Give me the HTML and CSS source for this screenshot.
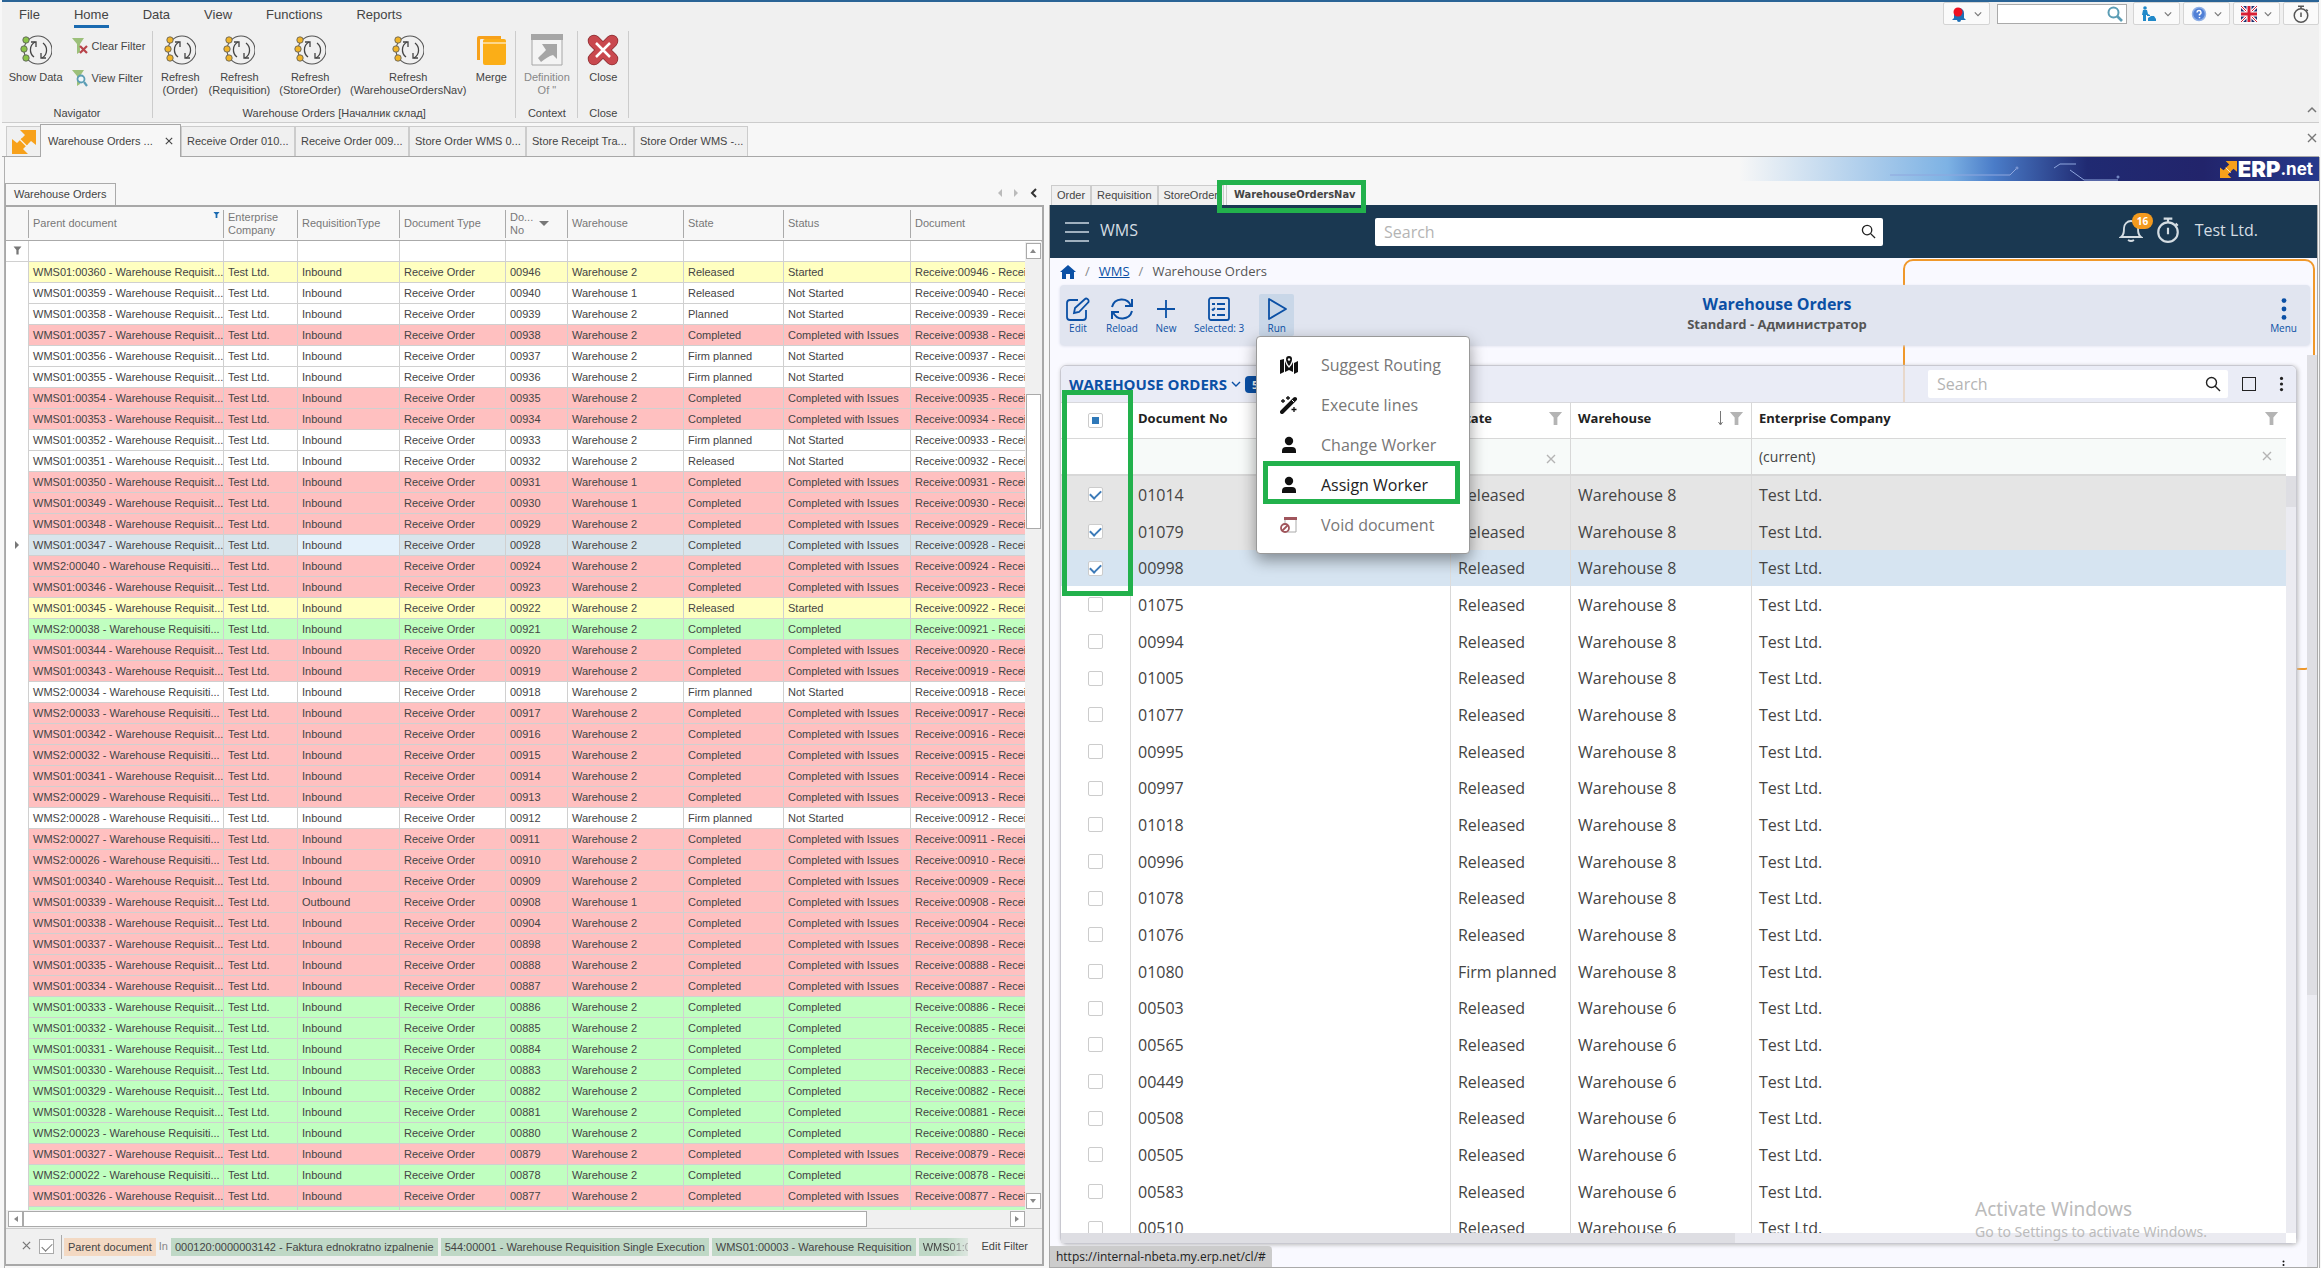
FILE: index.html
```html
<!DOCTYPE html>
<html lang="en">
<head>
<meta charset="utf-8">
<title>Warehouse Orders</title>
<link rel="stylesheet" href="styles.css">
</head>
<body>
<svg class="defs" aria-hidden="true">
  <symbol id="i-refresh" viewBox="0 0 32 32">
    <circle cx="18" cy="16" r="14" fill="none" stroke="#555" stroke-width="1.1"/>
    <path d="M15 8a9 9 0 0 0-1 15M22 24a9 9 0 0 0 1-15" fill="none" stroke="#444" stroke-width="1.3"/>
    <path d="M11 8h5v5M26 24h-5v-5" fill="none" stroke="#444" stroke-width="1.3"/>
    <g fill="currentColor" stroke="#555" stroke-width=".8"><circle cx="6" cy="6" r="3.2"/><circle cx="4" cy="15" r="3.2"/><circle cx="6" cy="24" r="3.2"/></g>
  </symbol>
  <symbol id="i-funnel" viewBox="0 0 16 16"><path d="M1 1h14l-5 6v8H6V7z" fill="currentColor"/></symbol>
  <symbol id="i-lens" viewBox="0 0 16 16"><circle cx="6.5" cy="6.5" r="5" fill="none" stroke="currentColor" stroke-width="1.4"/><path d="M10 10l5 5" stroke="currentColor" stroke-width="1.4"/></symbol>
  <symbol id="i-chev" viewBox="0 0 10 10"><path d="M1 3l4 4 4-4" fill="none" stroke="currentColor" stroke-width="1.4"/></symbol>
  <symbol id="i-x" viewBox="0 0 10 10"><path d="M1 1l8 8M9 1l-8 8" fill="none" stroke="currentColor" stroke-width="1.4"/></symbol>
  <symbol id="i-erp" viewBox="0 0 24 24"><g fill="#f7a11b"><path d="M8 0h16v15l-5-4-5 5-6-6 5-5z"/><path d="M16 24H0V9l5 4 5-5 6 6-5 5z"/></g><path d="M8 9.500l7 7" stroke="#f9f3e8" stroke-width="1.200"/></symbol>
  <symbol id="i-timer" viewBox="0 0 24 24"><g fill="none" stroke="currentColor" stroke-width="2"><circle cx="12" cy="14" r="9"/><path d="M12 10v6M12 5V2M8 1.500h8M19 6l2 2"/></g></symbol>
  <symbol id="i-dots" viewBox="0 0 6 20"><g fill="currentColor"><circle cx="3" cy="3" r="2"/><circle cx="3" cy="10" r="2"/><circle cx="3" cy="17" r="2"/></g></symbol>
  <symbol id="i-person" viewBox="0 0 16 18"><circle cx="8" cy="5" r="4.200" fill="currentColor"/><path d="M1 17v-2q0-4 4-4h6q4 0 4 4v2z" fill="currentColor"/></symbol>
</svg>

<header class="ribbon">
  <div class="menubar">
    <nav class="menu">
      <a href="#">File</a><a href="#" class="on">Home</a><a href="#">Data</a><a href="#">View</a><a href="#">Functions</a><a href="#">Reports</a>
    </nav>
    <div class="quick">
      <button class="qbtn" aria-label="Alerts"><svg width="16" height="16" viewBox="0 0 16 16"><path d="M3 12V7a5 5 0 0 1 10 0v5l2 2H1z" fill="#1d6fb5"/><circle cx="8" cy="14" r="2" fill="#1d6fb5"/><circle cx="7" cy="6" r="4.500" fill="#f01020"/></svg><svg class="chev" width="8" height="8"><use href="#i-chev"/></svg></button>
      <label class="qsearch"><input type="text" aria-label="Search"><svg width="16" height="16" viewBox="0 0 16 16"><circle cx="6.500" cy="6.500" r="5" fill="none" stroke="#5b9db5" stroke-width="2"/><path d="M10 10l5 5" stroke="#5b9db5" stroke-width="2.600"/></svg></label>
      <button class="qbtn" aria-label="User"><svg width="16" height="16" viewBox="0 0 16 16" fill="#2189c9"><circle cx="4" cy="2" r="1.800"/><path d="M2 4h4l1 4 2 1v1H6V9H5v6H2V9H1zM7 15v-3l3-2h3l2 3v2z"/></svg><svg class="chev" width="8" height="8"><use href="#i-chev"/></svg></button>
      <button class="qbtn" aria-label="Help"><svg width="16" height="16" viewBox="0 0 16 16"><circle cx="8" cy="8" r="6.500" fill="#4f7fd6" stroke="#8fb0e6" stroke-width="1.500"/><path d="M6 6.500a2 2 0 1 1 2.500 2v1M8.500 11v1.200" fill="none" stroke="#fff" stroke-width="1.500"/></svg><svg class="chev" width="8" height="8"><use href="#i-chev"/></svg></button>
      <button class="qbtn" aria-label="Language"><svg width="16" height="16" viewBox="0 0 16 16"><path fill="#20306f" d="M0 0h16v16H0z"/><path d="M0 0l16 16M16 0L0 16" stroke="#fff" stroke-width="3"/><path d="M0 0l16 16M16 0L0 16" stroke="#d81e34" stroke-width="1"/><path d="M8 0v16M0 8h16" stroke="#fff" stroke-width="5"/><path d="M8 0v16M0 8h16" stroke="#d81e34" stroke-width="3"/></svg><svg class="chev" width="8" height="8"><use href="#i-chev"/></svg></button>
      <button class="qbtn timer" aria-label="Timer"><svg width="18" height="18"><use href="#i-timer"/></svg></button>
    </div>
  </div>
  <div class="groups">
    <section class="group navigator">
      <div class="tools">
        <button class="big green"><svg width="32" height="32"><use href="#i-refresh"/></svg>Show Data</button>
        <div class="stack">
          <button class="small"><svg width="16" height="18" viewBox="0 0 16 18"><path d="M0 1h12L8 7v8L5 17V7z" fill="#9cc07a"/><path d="M8 9l7 7M15 9l-7 7" stroke="#b8434a" stroke-width="2.200"/></svg>Clear Filter</button>
          <button class="small"><svg width="16" height="18" viewBox="0 0 16 18"><path d="M0 1h12L8 7v8L5 17V7z" fill="#9cc07a"/><circle cx="9" cy="10" r="3.500" fill="#eef6fa" stroke="#5b9db5" stroke-width="1.800"/><path d="M12 13l3 4" stroke="#5b9db5" stroke-width="2.200"/></svg>View Filter</button>
        </div>
      </div>
      <h2>Navigator</h2>
    </section>
    <section class="group">
      <div class="tools">
        <button class="big"><svg width="32" height="32"><use href="#i-refresh"/></svg>Refresh<br>(Order)</button>
        <button class="big"><svg width="32" height="32"><use href="#i-refresh"/></svg>Refresh<br>(Requisition)</button>
        <button class="big"><svg width="32" height="32"><use href="#i-refresh"/></svg>Refresh<br>(StoreOrder)</button>
        <button class="big"><svg width="32" height="32"><use href="#i-refresh"/></svg>Refresh<br>(WarehouseOrdersNav)</button>
        <button class="big"><svg width="32" height="32" viewBox="0 0 32 32"><path d="M2 26V4q0-2 2-2h22v3H6q-1 0-1 1v20z" fill="#f7a11b"/><rect x="8" y="5" width="23" height="26" rx="2" fill="#fbae17"/><path d="M8 9h23" stroke="#fff" stroke-width="1"/></svg>Merge</button>
      </div>
      <h2>Warehouse Orders [Началник склад]</h2>
    </section>
    <section class="group context">
      <div class="tools"><button class="big off"><svg width="32" height="32" viewBox="0 0 32 32"><path d="M1 4h30v27H1z" fill="#f4f4f4" stroke="#a6a6a6"/><path d="M0 0h32v6H0z" fill="#a6a6a6"/><path d="M11 10h15v15l-4-4c-4 1-8 4-12 7l-3-4c3-3 6-6 8-8z" fill="#a6a6a6"/></svg>Definition<br>Of "</button></div>
      <h2>Context</h2>
    </section>
    <section class="group closer">
      <div class="tools"><button class="big"><svg width="32" height="32" viewBox="0 0 32 32"><path d="M7 7l18 18M25 7L7 25" stroke="#8c3034" stroke-width="12.500" stroke-linecap="round"/><path d="M7 7l18 18M25 7L7 25" stroke="#c9484e" stroke-width="11" stroke-linecap="round"/><path d="M9 9l14 14M23 9L9 23" stroke="#fff" stroke-width="2.500"/></svg>Close</button></div>
      <h2>Close</h2>
    </section>
    <svg class="collapse" width="10" height="10" viewBox="0 0 10 10"><path d="M1 7l4-4 4 4" fill="none" stroke="#777" stroke-width="1.500"/></svg>
  </div>
</header>

<nav class="doctabs">
  <button class="app" aria-label="ERP"><svg width="24" height="24"><use href="#i-erp"/></svg></button>
  <button class="dtab on">Warehouse Orders ...<svg width="8" height="8"><use href="#i-x"/></svg></button>
  <button class="dtab w114">Receive Order 010...</button>
  <button class="dtab w114">Receive Order 009...</button>
  <button class="dtab w117">Store Order WMS 0...</button>
  <button class="dtab w108">Store Receipt Tra...</button>
  <button class="dtab w114">Store Order WMS -...</button>
  <span class="closeall"><svg width="10" height="10"><use href="#i-x"/></svg></span>
</nav>

<main class="workspace">
  <div class="banner">
    <svg class="circuit" width="240" height="24" viewBox="0 0 240 24"><g fill="none" stroke="#8fa6dd" stroke-width="1"><path d="M0 18h120l6-6M164 11l6-4h16M180 13l14 10h34"/><circle cx="127" cy="11" r="1"/><circle cx="228" cy="20" r="1"/></g></svg>
    <svg class="mark" width="17" height="17"><use href="#i-erp"/></svg><span class="brand">ERP</span><span class="net">.net</span>
  </div>
  <div class="panes">
    <section class="left">
      <div class="pagetabs">
        <button class="ptab">Warehouse Orders</button>
        <div class="arrows"><i class="la"></i><i class="ra"></i><svg width="8" height="10" viewBox="0 0 8 10"><path d="M6 1L2 5l4 4" fill="none" stroke="#333" stroke-width="2"/></svg></div>
      </div>
      <div class="gridbox">
        <div class="gridview">
          <table class="grid">
            <colgroup><col class="c0"><col class="c1"><col class="c2"><col class="c3"><col class="c4"><col class="c5"><col class="c6"><col class="c7"><col class="c8"><col></colgroup>
            <thead>
              <tr><th></th><th>Parent document<svg class="hf" width="7" height="8"><use href="#i-funnel"/></svg></th><th>Enterprise<br>Company</th><th>RequisitionType</th><th>Document Type</th><th class="sorted">Do...<br>No<i></i></th><th>Warehouse</th><th>State</th><th>Status</th><th>Document</th></tr>
            </thead>
            <tbody id="orders">
              <tr class="filter"><td><svg width="9" height="9"><use href="#i-funnel"/></svg></td><td></td><td></td><td></td><td></td><td></td><td></td><td></td><td></td><td></td></tr>
            </tbody>
          </table>
          <div class="vbar"><span class="sb up"></span><span class="vthumb"></span><span class="sb down"></span></div>
        </div>
        <div class="hbar"><span class="sb prev"></span><span class="hthumb"></span><span class="sb next"></span></div>
        <div class="filterbar">
          <button class="fx" aria-label="Clear filter"><svg width="9" height="9"><use href="#i-x"/></svg></button>
          <input type="checkbox" checked aria-label="Filter enabled">
          <div class="expr"><span class="pill field">Parent document</span><span class="op">In</span><span class="pill">000120:0000003142 - Faktura ednokratno izpalnenie</span><span class="pill">544:00001 - Warehouse Requisition Single Execution</span><span class="pill">WMS01:00003 - Warehouse Requisition</span><span class="pill last">WMS01:00</span></div>
          <a href="#" class="edit">Edit Filter</a>
        </div>
      </div>
    </section>

    <section class="right">
      <div class="subtabs">
        <button>Order</button><button>Requisition</button><button>StoreOrder</button><button class="on">WarehouseOrdersNav</button>
        <span class="mark-box tabmark"></span>
      </div>
      <div class="web">
        <header class="topbar">
          <button class="burger" aria-label="Menu"><i></i><i></i><i></i></button>
          <span class="apptitle">WMS</span>
          <label class="topsearch"><input type="search" placeholder="Search" aria-label="Search"><svg width="15" height="15"><use href="#i-lens"/></svg></label>
          <div class="account">
            <span class="bell"><svg width="24" height="24" viewBox="0 0 24 24"><path d="M2 19c3-2 3-5 3-9a7 7 0 0 1 14 0c0 4 0 7 3 9zM9 22q3 2 6 0" fill="none" stroke="#d5dde3" stroke-width="1.800"/></svg><b>16</b></span>
            <svg width="26" height="26"><use href="#i-timer"/></svg>
            <span class="company">Test Ltd.</span>
          </div>
        </header>
        <div class="content">
          <div class="stage">
            <div class="frame"></div>
            <nav class="crumbs"><svg width="16" height="14" viewBox="0 0 16 14"><path d="M8 0l8 7h-2v7h-4V9H6v5H2V7H0z" fill="#0b50a5"/></svg><i>/</i><a href="#">WMS</a><i>/</i><span>Warehouse Orders</span></nav>
            <div class="toolbar">
              <div class="acts">
                <button><svg width="24" height="24" viewBox="0 0 24 24"><g fill="none" stroke="currentColor" stroke-width="1.800"><path d="M12 3H4q-3 0-3 3v14q0 3 3 3h13q3 0 3-3v-7"/><path d="M8 16l1-5L19 2q1-1 2.500 0t1 3L13 15z"/></g></svg>Edit</button>
                <button><svg width="24" height="24" viewBox="0 0 24 24"><g fill="none" stroke="currentColor" stroke-width="2"><path d="M2 10a10 10 0 0 1 19-1M22 14a10 10 0 0 1-19 1"/><path d="M22 2v7h-7M2 22v-7h7"/></g></svg>Reload</button>
                <button><svg width="24" height="24" viewBox="0 0 24 24"><path d="M12 3v18M3 12h18" stroke="currentColor" stroke-width="1.800"/></svg>New</button>
                <button><svg width="24" height="24" viewBox="0 0 24 24"><g fill="none" stroke="currentColor" stroke-width="1.800"><rect x="2" y="1" width="20" height="22" rx="2"/><path d="M10 7h8M10 12h8M10 18h8M5 7h3M5 18h3M5 12l1 1 2-2"/></g></svg>Selected: 3</button>
                <button class="run"><svg width="24" height="24" viewBox="0 0 24 24"><path d="M4 2v20l17-10z" fill="none" stroke="currentColor" stroke-width="1.800" stroke-linejoin="round"/></svg>Run</button>
                <div class="popup" role="menu">
                  <button><svg width="20" height="18" viewBox="0 0 20 18"><path d="M1 4l4-1v13l-4 2zM15 7l4-2v11l-4 2zM6 5q1 4 4 7 3-3 4-6v10l-4-2-4 2z" fill="currentColor"/><path d="M10 10C6 5 6 0 10 0s4 5 0 10z" fill="currentColor"/><circle cx="10" cy="3.500" r="1.200" fill="#fff"/></svg>Suggest Routing</button>
                  <button><svg width="18" height="18" viewBox="0 0 18 18"><path d="M2 16L15 3" stroke="currentColor" stroke-width="4" stroke-linecap="round"/><path d="M3 3v4M1 5h4M8 0v4M6 2h4M14 11v5M11.500 13.500h5" stroke="currentColor" stroke-width="1.300"/><path d="M12 4l2 2" stroke="#fff"/></svg>Execute lines</button>
                  <button><svg width="16" height="18"><use href="#i-person"/></svg>Change Worker</button>
                  <button class="hot"><svg width="16" height="18"><use href="#i-person"/></svg>Assign Worker<span class="mark-box itemmark"></span></button>
                  <button><svg width="18" height="18" viewBox="0 0 18 18"><path d="M5 2v14h11V2z" fill="#fff" stroke="#aaa"/><path d="M4 1h13v3H4z" fill="#a0555c"/><circle cx="5" cy="12" r="4" fill="#fff" stroke="#a0555c" stroke-width="1.800"/><path d="M2 15l6-6" stroke="#a0555c" stroke-width="1.800"/></svg>Void document</button>
                </div>
              </div>
              <div class="heading"><h1>Warehouse Orders</h1><p>Standard - Администратор</p></div>
              <button class="more"><svg width="8" height="24"><use href="#i-dots"/></svg>Menu</button>
            </div>
            <section class="card">
              <header class="cardhead">
                <h2>WAREHOUSE ORDERS</h2><svg width="10" height="10"><use href="#i-chev"/></svg><span class="count">5</span>
                <label class="cardsearch"><input type="search" placeholder="Search" aria-label="Search orders"><svg width="16" height="16"><use href="#i-lens"/></svg></label>
                <button class="square" aria-label="Maximize"></button>
                <button class="kebab" aria-label="More"><svg width="5" height="16"><use href="#i-dots"/></svg></button>
              </header>
              <div class="cardbody">
                <div class="listview">
                  <table class="list">
                    <colgroup><col class="k0"><col class="k1"><col class="k2"><col class="k3"><col></colgroup>
                    <thead>
                      <tr><th><input type="checkbox" class="some" aria-label="Select all"></th><th>Document No</th><th>State<svg class="f" width="15" height="15"><use href="#i-funnel"/></svg></th><th>Warehouse<svg class="f" width="15" height="15"><use href="#i-funnel"/></svg><svg class="s" width="7" height="15" viewBox="0 0 7 15"><path d="M3.500 0v13M1.500 11l2 3 2-3" fill="none" stroke="#777"/></svg></th><th>Enterprise Company<svg class="f" width="15" height="15"><use href="#i-funnel"/></svg></th></tr>
                      <tr class="cond"><td></td><td></td><td><svg class="f" width="10" height="10"><use href="#i-x"/></svg></td><td></td><td>(current)<svg class="f" width="10" height="10"><use href="#i-x"/></svg></td></tr>
                    </thead>
                    <tbody id="list"></tbody>
                  </table>
                </div>
                <div class="cardv"><i></i></div>
              </div>
              <div class="cardh"><i></i></div>
              <span class="mark-box checkmark"></span>
            </section>
            <div class="foot"><svg width="3" height="10"><use href="#i-dots"/></svg></div>
          </div>
          <div class="pagev"><i></i></div>
        </div>
        <div class="linkhint">https://internal-nbeta.my.erp.net/cl/#</div>
      </div>
      <div class="watermark"><b>Activate Windows</b>Go to Settings to activate Windows.</div>
    </section>
  </div>
</main>
<script src="app.js"></script>
</body>
</html>
```
FILE: styles.css
```css
* { box-sizing: border-box; }
html, body { height: 100%; margin: 0; }
body {
  display: flex; flex-direction: column; overflow: hidden;
  background: #f7f7f7; color: #444;
  font: 11px/13px "Liberation Sans", sans-serif;
}
button { font: inherit; color: inherit; border: 0; background: none; padding: 0; margin: 0; white-space: nowrap; }
a { color: inherit; text-decoration: none; }
h1, h2, p { margin: 0; font-size: inherit; font-weight: 400; }
.defs { position: absolute; width: 0; height: 0; }
input { font: inherit; margin: 0; border: 0; outline: 0; }

.ribbon { margin: 0 2px; border-top: 2px solid #2a6496; border-bottom: 1px solid #ccc; background: #f0f0f0; }
.menubar { display: flex; justify-content: space-between; height: 26px; }
.menu { display: flex; gap: 34px; padding-left: 17px; font-size: 13px; line-height: 26px; }
.menu a { height: 26px; }
.menu .on { border-bottom: 3px solid #1a6ab0; }
.quick { display: flex; gap: 3px; }
.qbtn { display: flex; align-items: center; justify-content: center; gap: 7px; width: 47px; height: 23px; border: 1px solid #d4d4d4; border-radius: 2px; background: #fafafa; }
.qbtn.timer { width: 36px; color: #555; }
.chev { color: #777; }
.qsearch { display: flex; align-items: center; width: 130px; height: 20px; margin: 2px 3px 0 4px; padding-right: 3px; border: 1px solid #aaa; background: #fff; }
.qsearch input { flex: 1; min-width: 0; background: none; }
.groups { display: flex; height: 94px; padding-top: 3px; }
.group { display: flex; flex-direction: column; justify-content: space-between; height: 87px; padding: 0 8px; border-right: 1px solid #ccc; }
.group h2 { text-align: center; line-height: 10px; white-space: nowrap; }
.tools { display: flex; justify-content: center; gap: 9px; padding-top: 3px; }
.big { display: flex; flex-direction: column; align-items: center; color: #444; }
.big svg { margin-bottom: 5px; color: #f0b429; }
.big.green svg { color: #8bc34a; }
.big.off { color: #888; }
.navigator { width: 151px; }
.stack { display: flex; flex-direction: column; gap: 14px; padding-top: 3px; }
.small { display: flex; align-items: center; gap: 4px; }
.context { width: 62px; }
.closer { width: 51px; }
.collapse { margin: auto 2px 7px auto; }

.doctabs { display: flex; align-items: flex-end; height: 34px; padding: 0 2px 0 4px; border-bottom: 1px solid #a8a8a8; margin: 0 2px; }
.doctabs button { height: 30px; border: 1px solid #ccc; border-bottom: 0; background: #f0f0f0; }
.doctabs .app { width: 34px; display: flex; align-items: center; justify-content: center; border-right: 0; }
.doctabs .dtab { padding: 0 5px; text-align: left; overflow: hidden; }
.doctabs .dtab.on { display: flex; align-items: center; justify-content: space-between; width: 141px; height: 33px; margin-bottom: -1px; padding: 0 7px; border-color: #a8a8a8; background: #f7f7f7; }
.doctabs .w114 { width: 114px; }
.doctabs .w117 { width: 117px; }
.doctabs .w108 { width: 108px; }
.closeall { margin: auto 0 auto auto; color: #777; }

.workspace { flex: 1; min-height: 0; display: flex; flex-direction: column; margin: 0 1px 0 4px; border: solid #b0b0b0; border-width: 0 1px 0 1px; }
.banner { display: flex; align-items: center; justify-content: flex-end; height: 24px; padding-right: 6px; color: #fff;
  background: linear-gradient(90deg, #f7f7f7, #7db2e4 36%, #4a7cc8 44%, #202a72 60%, #22246b 80%, #26398c) right / 580px 100% no-repeat; }
.circuit { margin-right: 90px; }
.brand { font: 900 22px/22px Inter, sans-serif; }
.net { font: 700 17px/22px Inter, sans-serif; }
.mark { margin-right: 1px; }
.panes { flex: 1; min-height: 0; display: flex; }

.left { flex: 0 0 1039px; flex: 0 0 44.9%; min-width: 0; display: flex; flex-direction: column; padding-bottom: 2px; }
.pagetabs { display: flex; justify-content: space-between; align-items: flex-end; height: 24px; }
.ptab { height: 22px; padding: 0 8px; border: 1px solid #aaa; border-bottom: 0; background: #f7f7f7; }
.arrows { display: flex; align-items: center; gap: 12px; padding: 0 6px 7px 0; }
.arrows i { border: 4px solid transparent; }
.arrows .la { border-right-color: #bbb; border-left: 0; }
.arrows .ra { border-left-color: #bbb; border-right: 0; }
.gridbox { flex: 1; min-height: 0; display: flex; flex-direction: column; border: 2px solid #a8a8a8; border-left-width: 1px; background: #f0f0f0; }
.gridview { position: relative; flex: 1; min-height: 0; overflow: hidden; background: #fff; }
table { border-collapse: separate; border-spacing: 0; table-layout: fixed; width: 100%; }
.c0 { width: 23px; } .c1 { width: 195px; } .c2 { width: 74px; } .c3 { width: 102px; } .c4 { width: 106px; }
.c5 { width: 62px; } .c6 { width: 116px; } .c7 { width: 100px; } .c8 { width: 127px; }
.grid th { position: relative; height: 34px; padding: 0 4px; text-align: left; font-weight: 400; color: #777; background: #f7f7f7; border-bottom: 1px solid #aaa; white-space: nowrap; }
.grid th:not(:last-child)::after { content: ""; position: absolute; right: 0; top: 3px; bottom: 2px; width: 1px; background: #aaa; }
.hf { position: absolute; right: 4px; top: 4px; color: #1a6ab0; }
.sorted i { position: absolute; right: 19px; top: 14px; border: 5px solid transparent; border-top-color: #777; border-bottom: 0; }
.grid td { height: 21px; padding: 0 4px; border: solid #d0d0d0; border-width: 0 1px 1px 0; white-space: nowrap; overflow: hidden; }
.grid td:first-child { background: #fff; border-bottom: 0; text-align: center; padding: 0; color: #777; }
.grid .filter td:first-child { border-bottom: 1px solid #d0d0d0; }
.grid .r td { background: #ffc0c0; }
.grid .g td { background: #c0ffc0; }
.grid .y td { background: #ffffc0; }
.grid .sel td { background: #d8e5ec; }
.grid .sel td:nth-child(4) { background: #e4f1fb; }
.grid tr td:first-child, .grid .sel td:first-child { background: #fff; }
.ptr { display: inline-block; border: 4px solid transparent; border-left-color: #777; border-right: 0; }
.vbar { position: absolute; right: 0; top: 35px; bottom: 0; width: 17px; background: #f0f0f0; display: flex; flex-direction: column; padding: 1px; }
.sb { flex: none; display: flex; align-items: center; justify-content: center; width: 15px; height: 16px; border: 1px solid #aaa; background: #fff; }
.sb::before { content: ""; border: 3px solid transparent; }
.up::before { border-bottom: 4px solid #888; border-top: 0; }
.down::before { border-top: 4px solid #888; border-bottom: 0; }
.prev::before { border-right: 4px solid #888; border-left: 0; }
.next::before { border-left: 4px solid #888; border-right: 0; }
.vthumb { width: 15px; height: 14%; margin: 135px 0 auto; border: 1px solid #aaa; background: #fff; }
.hbar { display: flex; height: 16px; margin-top: 1px; padding: 0 17px 0 2px; }
.hthumb { width: 83%; margin-right: auto; border: 1px solid #aaa; background: #fff; }
.filterbar { display: flex; align-items: center; height: 36px; padding: 0 14px; margin-top: 1px; border-top: 1px solid #ccc; }
.fx { width: 12px; color: #777; margin-right: 7px; }
input[type=checkbox] { appearance: none; flex: none; display: grid; place-items: center; width: 15px; height: 15px; border: 1px solid #ccc; background: #fff; }
input[type=checkbox]:checked::before { content: ""; width: 9px; height: 5px; border: solid #3c7ab8; border-width: 0 0 2px 2px; transform: translateY(-1px) rotate(-45deg); }
.filterbar input { border-color: #aaa; }
.filterbar input:checked::before { border-color: #777; border-width: 0 0 1px 1px; }
.expr { flex: 1; min-width: 0; display: flex; gap: 3px; overflow: hidden; margin-left: 7px; padding: 0 2px; height: 24px; align-items: center; border-left: 1px solid #aaa; white-space: nowrap; }
.pill { flex: none; padding: 0 4px; line-height: 18px; background: #bfd8c6; }
.pill.field { background: #f3d9c3; }
.pill.last { mask-image: linear-gradient(90deg, #000 45%, transparent); }
.op { color: #888; }
.edit { margin-left: 14px; }

.right { position: relative; flex: 1; min-width: 0; display: flex; flex-direction: column; padding-left: 5px; }
.subtabs { position: relative; display: flex; align-items: flex-end; height: 24px; padding-left: 2px; }
.subtabs button { height: 20px; padding: 0 5px; border: 1px solid #ccc; border-bottom: 0; background: #f0f0f0; }
.subtabs .on { height: 22px; margin-left: 2px; padding: 0 7px; font: 700 11px/13px "DejaVu Sans Condensed", "DejaVu Sans", sans-serif; background: #f7f7f7; }
.mark-box { position: absolute; border: 5px solid #22b14c; pointer-events: none; z-index: 5; }
.tabmark { left: 168px; top: -1px; width: 149px; height: 33px; }
.web { position: relative; flex: 1; min-height: 0; display: flex; flex-direction: column; margin-right: 1px; border: 1px solid #aaa; border-top: 0; font-family: "Open Sans", sans-serif; }
.topbar { flex: none; display: flex; align-items: center; height: 53px; padding: 0 59px 0 15px; background: #1a3851; color: #d5dde3; font-size: 16px; }
.burger { display: flex; flex-direction: column; gap: 7px; }
.burger i { width: 24px; height: 2px; background: #9fb0be; }
.apptitle { width: 275px; margin-left: 11px; padding-bottom: 3px; }
.topsearch, .cardsearch { display: flex; align-items: center; height: 28px; padding: 0 7px; border-radius: 2px; background: #fff; color: #222; font-size: 16px; }
.topsearch { width: 508px; }
.topsearch input, .cardsearch input { flex: 1; min-width: 0; background: none; }
::placeholder { color: #b4b4b4; opacity: 1; }
.account { display: flex; align-items: center; margin-left: auto; padding-bottom: 3px; }
.bell { position: relative; width: 36px; height: 24px; }
.bell b { position: absolute; left: 13px; top: -5px; padding: 0 5px; border-radius: 8px; background: #f39a1e; color: #fff; font-size: 10px; line-height: 16px; }
.company { margin-left: 14px; }
.content { flex: 1; min-height: 0; display: flex; background: #f9f9ff; }
.stage { position: relative; flex: 1; min-width: 0; display: flex; flex-direction: column; padding: 0 10px; }
.frame { position: absolute; left: 853px; right: -8px; top: 1px; height: 411px; border: 2px solid #f0982a; border-radius: 10px; }
.crumbs { position: relative; display: flex; align-items: center; gap: 9px; height: 27px; font-size: 13px; color: #555; }
.crumbs i { font-style: normal; color: #888; }
.crumbs a { color: #0b50a5; text-decoration: underline; }
.toolbar { position: relative; z-index: 3; display: flex; justify-content: space-between; height: 60px; margin-right: -13px; padding: 9px 12px 0 5px; border-radius: 4px; background: #e1e5f0; box-shadow: 0 1px 3px #d6dae8; color: #0b50a5; font-size: 10px; }
.acts { position: relative; display: flex; gap: 14px; height: 42px; }
.acts > button, .more { display: flex; flex-direction: column; align-items: center; justify-content: space-between; height: 42px; padding: 3px 1px 1px; }
.acts > .run { width: 35px; background: #c9d7e8; border-radius: 2px; }
.heading { position: absolute; left: 0; right: 0; margin-left: 184px; text-align: center; font-weight: 700; pointer-events: none; }
.heading h1 { color: #0b50a5; font-size: 16px; line-height: 20px; font-weight: 700; }
.heading p { color: #555; font-size: 13px; line-height: 20px; font-weight: 700; }
.popup { position: absolute; left: 191px; top: 42px; width: 214px; padding: 8px 0; border: 1px solid #999; border-radius: 4px; background: #fff; box-shadow: 0 6px 16px #0006; }
.popup button { position: relative; display: grid; grid-template-columns: 20px 1fr; gap: 22px; align-items: center; justify-items: start; width: 100%; height: 40px; padding-left: 22px; font-size: 16px; color: #777; text-align: left; }
.popup svg { color: #111; justify-self: center; }
.popup .hot { color: #222; }
.itemmark { left: 6px; top: -4px; width: 197px; height: 43px; }

.card { position: relative; flex: 1; min-height: 0; display: flex; flex-direction: column; margin-top: 20px; border: 1px solid #c8c8d0; border-radius: 6px; box-shadow: 1px 1px 4px #bbb; }
.cardhead { position: relative; display: flex; align-items: center; height: 37px; padding-left: 8px; padding-right: 12px; background: #e6e9f4cc; border-bottom: 1px solid #d8d8dc; border-radius: 6px 6px 0 0; color: #0b50a5; }
.cardhead h2 { font-size: 15px; font-weight: 700; margin-right: 4px; white-space: nowrap; }
.count { width: 24px; margin-left: 4px; padding-left: 7px; border-radius: 4px; background: #0b50a5; color: #fff; font-weight: 700; line-height: 17px; }
.cardsearch { margin-left: auto; width: 300px; }
.square { width: 14px; height: 14px; margin: 0 23px 0 14px; border: 1px solid #222; }
.kebab { display: flex; color: #222; }
.cardbody { flex: 1; min-height: 0; display: flex; background: #fff; }
.listview { flex: 1; min-width: 0; overflow: hidden; }
.k0 { width: 70px; } .k1 { width: 320px; } .k2 { width: 120px; } .k3 { width: 181px; }
.list { font-size: 16px; line-height: 20px; color: #444; }
.list th { height: 36px; text-align: left; font-size: 13px; font-weight: 700; color: #222; padding: 0 7px 6px; border: solid #d8d8d8; border-width: 0 1px 1px 0; }
.list td { height: 37px; padding: 0 7px; border-right: 1px solid #d8d8d8; }
.list tr > :last-child { border-right: 0; }
.list tbody tr:nth-child(3n) td { height: 36px; }
.list .cond td { height: 37px; background: #f7faf9; border-bottom: 2px solid #d8d8d8; font-size: 14px; }
.list .cond td:first-child { background: #fff; }
.list tr > :first-child { text-align: center; padding: 0; }
.list input { margin: 0 auto; border-radius: 2px; }
.list .some::before { content: ""; width: 7px; height: 7px; background: #2e78b8; }
.list .on td { background: #e5e5e5; border-right-color: #dcdcdc; }
.list .cur td { background: #d6e4f1; border-right-color: #dcdcdc; }
.f { float: right; margin: 3px 0 0; color: #b4b4b4; }
.cond .f { margin: 4px 7px 0 0; }
th .s { float: right; margin: 3px 5px 0 0; }
.cardv { width: 10px; margin-top: 73px; background: #ebebf1; }
.cardv i { display: block; height: 31px; background: #dedee3; }
.cardh { height: 10px; padding-right: 10px; background: linear-gradient(#ebebf1, #ebebf1) 0 0 / calc(100% - 10px) 100% no-repeat #fff; }
.cardh i { display: block; width: 55%; height: 10px; background: #dedee3; }
.checkmark { left: 1px; top: 24px; width: 71px; height: 206px; }
.foot { flex: none; height: 23px; padding: 15px 12px 0; text-align: right; overflow: hidden; color: #111; }
.pagev { position: relative; z-index: 2; width: 10px; padding-top: 97px; }
.pagev::after { content: ""; display: block; height: calc(100% - 640px); background: #ebebf1; }
.pagev i { display: block; height: 640px; background: #dedee3; }
.linkhint { position: absolute; left: 0; bottom: 0; z-index: 6; padding: 0 6px; line-height: 21px; font-size: 12px; color: #222; background: #ccc; border-top-right-radius: 4px; }
.watermark { position: absolute; right: 112px; bottom: 26px; z-index: 6; color: #bbb; font: 14px/20px "Noto Sans", sans-serif; pointer-events: none; }
.watermark b { display: block; font-size: 19px; line-height: 26px; font-weight: 400; }
```
FILE: app.js
```js
// reference | document no | row kind | optional warehouse and state
const orders = [
  "1:00360 00946 y", "1:00359 00940 w W1 Released", "1:00358 00939 w W2 Planned", "1:00357 00938 r",
  "1:00356 00937 w", "1:00355 00936 w", "1:00354 00935 r", "1:00353 00934 r", "1:00352 00933 w",
  "1:00351 00932 w W2 Released", "1:00350 00931 r W1", "1:00349 00930 r W1", "1:00348 00929 r",
  "1:00347 00928 sel", "2:00040 00924 r", "1:00346 00923 r", "1:00345 00922 y", "2:00038 00921 g",
  "1:00344 00920 r", "1:00343 00919 r", "2:00034 00918 w", "2:00033 00917 r", "1:00342 00916 r",
  "2:00032 00915 r", "1:00341 00914 r", "2:00029 00913 r", "2:00028 00912 w", "2:00027 00911 r",
  "2:00026 00910 r", "1:00340 00909 r", "1:00339 00908 r W1", "1:00338 00904 r", "1:00337 00898 r",
  "1:00335 00888 r", "1:00334 00887 r", "1:00333 00886 g", "1:00332 00885 g", "1:00331 00884 g",
  "1:00330 00883 g", "1:00329 00882 g", "1:00328 00881 g", "2:00023 00880 g", "1:00327 00879 r",
  "2:00022 00878 g", "1:00326 00877 r"
];
const state = { y: "Released", w: "Firm planned", r: "Completed", g: "Completed", sel: "Completed" };
const status = { y: "Started", w: "Not Started", r: "Completed with Issues", g: "Completed", sel: "Completed with Issues" };

const body = document.getElementById("orders");
for (const line of orders) {
  const [ref, no, kind, wh = "W2", st] = line.split(" ");
  const parent = ref[0] === "1"
    ? "WMS01:" + ref.slice(2) + " - Warehouse Requisit..."
    : "WMS2:" + ref.slice(2) + " - Warehouse Requisiti...";
  const cells = [
    kind === "sel" ? '<i class="ptr"></i>' : "", parent, "Test Ltd.",
    no === "00908" ? "Outbound" : "Inbound", "Receive Order", no,
    "Warehouse " + wh[1], st || state[kind], status[kind], "Receive:" + no + " - Receive"
  ];
  body.insertAdjacentHTML("beforeend",
    `<tr class="${kind}">${cells.map(c => `<td>${c}</td>`).join("")}</tr>`);
}
body.insertAdjacentHTML("beforeend", `<tr class="g">${"<td></td>".repeat(10)}</tr>`);

const docs = ["01014", "01079", "00998", "01075", "00994", "01005", "01077", "00995", "00997", "01018",
  "00996", "01078", "01076", "01080", "00503", "00565", "00449", "00508", "00505", "00583", "00510"];
const list = document.getElementById("list");
docs.forEach((no, i) => {
  const cls = i < 2 ? "on" : i === 2 ? "cur" : "";
  const cells = [
    `<input type="checkbox" aria-label="${no}"${i < 3 ? " checked" : ""}>`, no,
    no === "01080" ? "Firm planned" : "Released", "Warehouse " + (i < 14 ? 8 : 6), "Test Ltd."
  ];
  list.insertAdjacentHTML("beforeend",
    `<tr class="${cls}">${cells.map(c => `<td>${c}</td>`).join("")}</tr>`);
});
```
